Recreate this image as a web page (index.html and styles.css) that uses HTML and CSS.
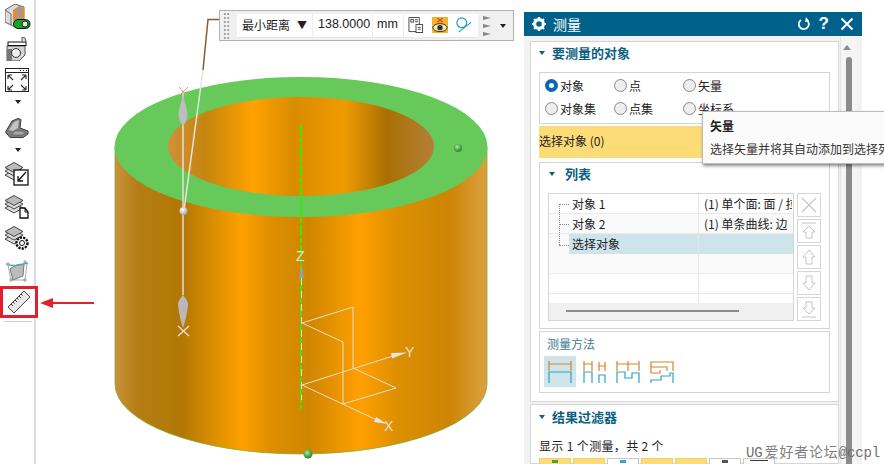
FILE: index.html
```html
<!DOCTYPE html>
<html lang="zh">
<head>
<meta charset="utf-8">
<title>测量</title>
<link rel="stylesheet" href="styles.css">
</head>
<body>
<div class="app">
  <nav class="rail">
    <svg class="ic ic1" viewBox="0 0 26 25"><path d="M0 6l10-6 9 3v14l-9 6-10-5z" fill="#dcdcdc" stroke="#666"/><path d="M8 6l6-4 5 2v13l-5 3-6-3z" fill="#e08a3a"/><path d="M12 4l4-2v16l-4 2z" fill="#9a9a9a"/><path d="M0 6l6 4v11" fill="none" stroke="#666"/><rect x="8.500" y="15.500" width="16.500" height="9" rx="4.500" fill="#12a52a" stroke="#111"/><circle cx="20" cy="20" r="3" fill="#dff2e0" stroke="#111"/></svg>
    <svg class="ic ic2" viewBox="0 0 24 24"><path d="M2 9v15h12l6-6V9z" fill="#d4d4d4" stroke="#555"/><path d="M2 12h5v12H2z" fill="#777"/><circle cx="11" cy="16" r="4.500" fill="#eee" stroke="#333"/><rect x="3" y="5" width="18" height="3.500" fill="#fff" stroke="#111"/><path d="M17 5V0l3 1 1 4z" fill="#ddd" stroke="#555"/></svg>
    <svg class="ic ic3" viewBox="0 0 24 24"><rect x=".5" y=".5" width="23" height="23" fill="#fff" stroke="#222"/><path d="M1 4.500h22" stroke="#222"/><path d="M15 2.500h1M18 2.500h1M21 2.500h1" stroke="#222"/><path d="M3 7l5 5M3 7h4M3 7v4M21 7l-5 5M21 7h-4M21 7v4M3 22l5-5M3 22h4M3 22v-4M21 22l-5-5M21 22h-4M21 22v-4" fill="none" stroke="#333" stroke-width="1.200"/></svg>
    <span class="caret"></span>
    <svg class="ic ic4" viewBox="0 0 24 20"><path d="M.5 14L7 3l6-2.500 3 1L15 10l8 3v3l-5 3.500H5z" fill="#7d7d7d" stroke="#3f3f3f"/><path d="M4 12L9 4l5-2-1 8-5 3z" fill="#c4c4c4"/><path d="M7 16l3-3h7l3 2-3 2H9z" fill="#a8a8a8" stroke="#555" stroke-width=".6"/></svg>
    <span class="caret caret-b"></span>
    <svg class="ic ic5" viewBox="0 0 24 24"><g fill="#ddd" stroke="#444"><path d="M0 13l9-5 9 5-9 5z"/><path d="M0 9l9-5 9 5-9 5z"/><path d="M0 5.500L9 .5l9 5-9 5z" fill="#bbb"/></g><rect x="9" y="8" width="14" height="15" fill="#fff" stroke="#111" stroke-width="1.300"/><path d="M13 19l8-9M13 14v5h5" fill="none" stroke="#111" stroke-width="1.300"/></svg>
    <svg class="ic ic6" viewBox="0 0 24 24"><g fill="#ddd" stroke="#444"><path d="M0 13l9-5 9 5-9 5z"/><path d="M0 9l9-5 9 5-9 5z"/><path d="M0 5.500L9 .5l9 5-9 5z" fill="#bbb"/></g><path d="M15 13h5l3 4v6H15z" fill="#fff" stroke="#111" stroke-width="1.300"/><path d="M20 13v4h3" fill="none" stroke="#111"/></svg>
    <svg class="ic ic7" viewBox="0 0 24 25"><g fill="#ddd" stroke="#444"><path d="M0 13l9-5 9 5-9 5z"/><path d="M0 9l9-5 9 5-9 5z"/><path d="M0 5.500L9 .5l9 5-9 5z" fill="#bbb"/></g><circle cx="17" cy="17" r="5.500" fill="#fff" stroke="#111" stroke-width="2.500" stroke-dasharray="2.200 1.100"/><circle cx="17" cy="17" r="2.500" fill="#fff" stroke="#111"/></svg>
    <svg class="ic ic8" viewBox="0 0 24 22"><path d="M5 9c5-4 9-5 14-5l-1 12-10 4z" fill="#bbb" stroke="#777"/><path d="M1 4c7 3 14 1 22-1" fill="none" stroke="#3fb0bf" stroke-width="1.300"/><path d="M3 5l3 15h14l2-16" fill="none" stroke="#888" stroke-width=".7"/><path d="M2 3h2v2H2zM19 1h2v2h-2zM5 19h2v2H5zM19 19h2v2h-2z" fill="#fff" stroke="#666" stroke-width=".6"/></svg>
    <div class="active-tool"><svg class="ruler" viewBox="0 0 24 24"><path d="M1 17L17 1l6 6L7 23z" fill="#e9e9e9" stroke="#444"/><path d="M4 14l2 2M6 12l1.500 1.500M8 10l2 2M10 8l1.500 1.500M12 6l2 2M14 4l1.500 1.500" stroke="#333" stroke-width="1"/></svg></div>
    <hr class="rail-rule">
  </nav>

  <main class="canvas">
    <svg class="scene" viewBox="36 0 488 464">
      <defs>
        <linearGradient id="wall" x1="115" x2="487" y1="0" y2="0" gradientUnits="userSpaceOnUse">
          <stop offset="0" stop-color="#c9923a"/><stop offset=".06" stop-color="#b57d15"/><stop offset=".18" stop-color="#b27704"/><stop offset=".26" stop-color="#d98d00"/><stop offset=".34" stop-color="#ffa100"/><stop offset=".42" stop-color="#dd8f00"/><stop offset=".52" stop-color="#cf8600"/><stop offset=".66" stop-color="#ffa000"/><stop offset=".76" stop-color="#dc8f00"/><stop offset=".9" stop-color="#cc8505"/><stop offset="1" stop-color="#dca043"/>
        </linearGradient>
        <linearGradient id="bore" x1="168" x2="435" y1="0" y2="0" gradientUnits="userSpaceOnUse">
          <stop offset="0" stop-color="#cf9238"/><stop offset=".14" stop-color="#c5850f"/><stop offset=".32" stop-color="#ffa200"/><stop offset=".47" stop-color="#d98c00"/><stop offset=".66" stop-color="#f09a00"/><stop offset=".82" stop-color="#a87002"/><stop offset="1" stop-color="#b4803a"/>
        </linearGradient>
        <radialGradient id="ball" cx=".4" cy=".35" r=".7"><stop offset="0" stop-color="#b8e8a8"/><stop offset=".5" stop-color="#55b050"/><stop offset="1" stop-color="#2f8032"/></radialGradient>
        <radialGradient id="pearl" cx=".4" cy=".35" r=".7"><stop offset="0" stop-color="#ffffff"/><stop offset="1" stop-color="#9c9c9c"/></radialGradient>
      </defs>
      <path d="M115 147V384A186 70 0 0 0 487 384V147z" fill="url(#wall)" stroke="#7fae3a" stroke-width=".8"/>
      <ellipse cx="301" cy="147" rx="186.500" ry="70" fill="#66c95a"/>
      <ellipse cx="301" cy="146.500" rx="133" ry="49.500" fill="url(#bore)"/>
      <path d="M301 125V409" stroke="#39e80e" stroke-width="2" stroke-dasharray="11 2 5 2"/>
      <path d="M219 19.500H208L203 70" fill="none" stroke="#8a5a32" stroke-width="1.500"/>
      <path d="M203 70L184 210" fill="none" stroke="#e4e4e0" stroke-width="1.500"/>
      <path d="M183 90V295" stroke="#e4e0d8" stroke-width="1.500"/>
      <path d="M179 87l8 9M188 87l-9 9" stroke="#c9a77c" stroke-width="1"/>
      <path d="M183 93C184 100 187 108 187.500 114C187.500 120 185 123 183 126C181 123 178.500 120 178.500 114C179 108 182 100 183 93z" fill="#bdbdbd"/>
      <path d="M183 295C185 298 188 300 188 305C187 314 185 322 183 328C181 322 179 314 178 305C178 300 181 298 183 295z" fill="#b9b9bd"/>
      <path d="M178 326l11 10M189 326l-11 10" stroke="#e8e4de" stroke-width="1.200"/>
      <circle cx="183.500" cy="211" r="4" fill="url(#pearl)"/>
      <circle cx="458" cy="148" r="4" fill="url(#ball)"/>
      <circle cx="308" cy="454" r="4.500" fill="url(#ball)"/>
      <g fill="none" stroke="#e8dfcf" stroke-width="1">
        <path d="M301.500 278V400" stroke-dasharray="7 6"/>
        <path d="M302 323L353 307V368M302 323L343 342V404M302 385L396 355M302 385L379 421M343 404L396 388L353 368"/>
      </g>
      <path d="M391 353l16-.5-15 6z" fill="#e4e4e4"/>
      <path d="M376 417l11 7-13-2z" fill="#e4e4e4"/>
      <path d="M301.500 264l2.500 14h-5z" fill="#8fa3a8"/>
      <text class="axis" x="296" y="261">Z</text>
      <text class="axis" x="405" y="357">Y</text>
      <text class="axis" x="384" y="431">X</text>
      <path d="M94 303H50" stroke="#e3202c" stroke-width="2"/>
      <path d="M40 303l13-5v10z" fill="#e3202c"/>
    </svg>

    <div class="float-bar">
      <span class="grip"></span>
      <div class="float-field">
        <span class="fld fld-name">最小距离<i class="tri">▼</i></span>
        <span class="fld fld-val">138.0000</span>
        <span class="fld fld-unit">mm</span>
        <svg class="fi" viewBox="0 0 16 17"><path d="M.5.5h11v9h-3v6h-8z" fill="#fff" stroke="#444"/><rect x="8" y="8" width="7" height="8.500" fill="#fff" stroke="#444"/><path d="M2.500 2.500h3v3h-3zM7 3h3M7 5h3M10 11h3M10 13h3" stroke="#444" fill="none"/></svg>
        <svg class="fi fi-eye" viewBox="0 0 18 18"><rect width="18" height="18" fill="#f3b52c"/><path d="M6 1l6 5M12 1L6 6" stroke="#d8501e" stroke-width="1.500"/><ellipse cx="9" cy="12" rx="8" ry="4.500" fill="#f7e8b0" stroke="#222"/><circle cx="9" cy="12" r="3" fill="#333"/></svg>
        <svg class="fi" viewBox="0 0 18 18"><circle cx="6.500" cy="6.500" r="5.500" fill="none" stroke="#1b9ec6" stroke-width="1.300"/><path d="M3 17L17 6" stroke="#1b9ec6" stroke-width="1.300"/></svg>
      </div>
      <span class="bar-more"><i></i><i></i><i></i></span>
      <span class="caret caret-sm"></span>
    </div>
  </main>

  <aside class="panel">
    <header class="panel-title">
      <svg class="gear" viewBox="0 0 16 16"><circle cx="8" cy="8" r="5" fill="none" stroke="#fff" stroke-width="3.600"/><path d="M8 0v3M8 13v3M0 8h3M13 8h3M2.300 2.300l2 2M11.700 11.700l2 2M2.300 13.700l2-2M11.700 4.300l2-2" stroke="#fff" stroke-width="2.400"/></svg>
      <span class="panel-name">测量</span>
      <svg class="reset" viewBox="0 0 14 14"><path d="M4 3a5 5 0 1 0 6 .3" fill="none" stroke="#fff" stroke-width="1.800"/><path d="M9 0l3 4-4 1z" fill="#fff"/></svg>
      <span class="help">?</span>
      <svg class="close" viewBox="0 0 14 14"><path d="M1.500 1.500l11 11M12.500 1.500l-11 11" stroke="#fff" stroke-width="2"/></svg>
    </header>
    <div class="panel-body">
      <div class="panel-scroll">
        <section class="card card-main">
          <h2 class="sec-head"><span class="sec-arrow"></span>要测量的对象</h2>
          <div class="radio-box">
            <label class="rd"><i class="dot on"></i>对象</label>
            <label class="rd"><i class="dot"></i>点</label>
            <label class="rd"><i class="dot"></i>矢量</label>
            <label class="rd"><i class="dot"></i>对象集</label>
            <label class="rd"><i class="dot"></i>点集</label>
            <label class="rd"><i class="dot"></i>坐标系</label>
          </div>
          <div class="select-row">选择对象 (0)</div>
          <div class="list-card">
            <h2 class="sec-head sec-list"><span class="sec-arrow"></span>列表</h2>
            <div class="list-wrap">
              <div class="table">
                <div class="row"><span class="c1">对象 1</span><span class="c2">(1) 单个面: 面 / 拉伸</span></div>
                <div class="row alt"><span class="c1">对象 2</span><span class="c2">(1) 单条曲线: 边</span></div>
                <div class="row sel"><span class="c1">选择对象</span><span class="c2"></span></div>
                <div class="row alt"><span class="c1"></span><span class="c2"></span></div>
                <div class="row"><span class="c1"></span><span class="c2"></span></div>
                <div class="row"><span class="c1"></span><span class="c2"></span></div>
                <span class="tree"></span>
                <span class="tree-b t1"></span><span class="tree-b t2"></span><span class="tree-b t3"></span>
                <div class="hscroll"><i></i></div>
              </div>
              <div class="list-btns">
                <button class="lb"><svg viewBox="0 0 22 22"><path d="M4 4l14 14M18 4L4 18" stroke="#c4c4c4" stroke-width="1.200"/></svg></button>
                <button class="lb"><svg viewBox="0 0 22 22"><path d="M4 3h14M11 6l6 6h-3v6H8v-6H5z" fill="none" stroke="#c4c4c4"/></svg></button>
                <button class="lb"><svg viewBox="0 0 22 22"><path d="M11 4l6 7h-3v7H8v-7H5z" fill="none" stroke="#c4c4c4"/></svg></button>
                <button class="lb"><svg viewBox="0 0 22 22"><path d="M11 18l6-7h-3V4H8v7H5z" fill="none" stroke="#c4c4c4"/></svg></button>
                <button class="lb"><svg viewBox="0 0 22 22"><path d="M4 19h14M11 16l6-6h-3V4H8v6H5z" fill="none" stroke="#c4c4c4"/></svg></button>
              </div>
            </div>
          </div>
          <div class="method-card">
            <h3 class="method-head">测量方法</h3>
            <div class="methods">
              <span class="mt on"><svg viewBox="0 0 24 23"><path d="M1 1V11M23 1V11M1 4h22" fill="none" stroke="#d98324" stroke-width="1.200"/><path d="M1 23V12H23V23" fill="none" stroke="#28a5c6" stroke-width="1.200"/></svg></span>
              <span class="mt"><svg viewBox="0 0 24 23"><path d="M2 1V11M10 1V11M2 4h8M17 2V11M23 2V11M17 6h6" fill="none" stroke="#d98324" stroke-width="1.200"/><path d="M2 23V12h8V23M17 23V15h6V23" fill="none" stroke="#28a5c6" stroke-width="1.200"/></svg></span>
              <span class="mt"><svg viewBox="0 0 24 23"><path d="M1 1V11M12 1V11M23 1V11M1 4h22" fill="none" stroke="#d98324" stroke-width="1.200"/><path d="M1 23V12h8v6h7v-5h7V23" fill="none" stroke="#28a5c6" stroke-width="1.200"/></svg></span>
              <span class="mt"><svg viewBox="0 0 24 23"><path d="M1 13V2H23V11M1 7H17V11M1 13H10V10" fill="none" stroke="#d98324" stroke-width="1.200"/><path d="M1 23V20H11V16H20V13H23V23" fill="none" stroke="#28a5c6" stroke-width="1.200"/></svg></span>
            </div>
          </div>
        </section>
        <section class="card card-filter">
          <h2 class="sec-head sec-filter"><span class="sec-arrow"></span>结果过滤器</h2>
          <p class="count">显示 1 个测量，共 2 个</p>
          <div class="filters"><i class="fb y m-green"></i><i class="fb y"></i><i class="fb m-teal"></i><i class="fb y"></i><i class="fb y"></i><i class="fb m-dark"></i><i class="fb m-wide"></i></div>
        </section>
      </div>
      <div class="vscroll"><span class="up"></span><span class="thumb"></span></div>
    </div>
    <div class="tooltip">
      <strong class="tip-title">矢量</strong>
      <span class="tip-text">选择矢量并将其自动添加到选择列表</span>
    </div>
  </aside>
</div>
<div class="watermark">UG<span class="wm-cjk">爱好者论坛</span>@ccpl</div>
</body>
</html>
```
FILE: styles.css
```css
* { box-sizing: border-box; }
html, body { margin: 0; height: 464px; overflow: hidden; background: #fff; }
body { position: relative; font: 12px/16px "Noto Sans CJK SC", "Liberation Sans", sans-serif; color: #222; }
.app { display: flex; width: 884px; height: 464px; overflow: hidden; }

.rail { flex: 0 0 36px; width: 36px; height: 464px; border-right: 2px solid #dcdcdc; display: flex; flex-direction: column; align-items: flex-start; position: relative; padding-top: 4px; z-index: 2; }
.ic { display: block; margin-left: 5px; width: 24px; height: 24px; flex: none; }
.ic1 { width: 26px; height: 25px; }
.ic2 { margin-top: 8px; }
.ic3 { margin-top: 7px; }
.ic4 { margin-top: 14px; height: 20px; }
.ic5 { margin-top: 10px; }
.ic6 { margin-top: 9px; }
.ic7 { margin-top: 7px; height: 25px; }
.ic8 { margin-top: 9px; height: 22px; }
.caret { display: block; width: 0; height: 0; margin: 8px 0 0 15px; border: 3px solid transparent; border-top: 4px solid #222; border-bottom: 0; flex: none; }
.caret-b { margin-top: 10px; }
.active-tool { flex: none; width: 38px; height: 32px; margin-top: 4px; border: 3px solid #e0202c; display: flex; align-items: center; justify-content: center; background: #fff; }
.ruler { width: 24px; height: 24px; }
.rail-rule { width: 28px; margin: 3px 0 0 4px; border: 0; border-top: 1px solid #d0d0d0; flex: none; }

.canvas { flex: 0 0 488px; width: 488px; height: 464px; position: relative; }
.scene { display: block; width: 488px; height: 464px; }
.axis { font: 14px "Liberation Sans", sans-serif; fill: #e8e2d6; }

.float-bar { position: absolute; left: 183px; top: 10px; width: 295px; height: 31px; background: #f0f0f0; border: 1px solid #b0b0b0; display: flex; align-items: center; }
.grip { width: 8px; height: 27px; margin: 0 6px 0 3px; background-image: radial-gradient(circle, #9a9a9a 1px, transparent 1.200px); background-size: 3.500px 4px; flex: none; }
.float-field { width: 241px; height: 24px; background: #fff; display: flex; align-items: center; border-bottom: 1px solid #e8e8e8; flex: none; }
.fld { font-size: 12px; white-space: nowrap; border-right: 1px solid #eee; height: 24px; line-height: 23px; flex: none; }
.fld-name { width: 76px; padding-left: 5px; display: flex; }
.tri { font-style: normal; font-size: 10px; margin-left: 7px; }
.fld-val { width: 60px; padding-left: 5px; font-family: "Liberation Sans", sans-serif; font-size: 12.500px; letter-spacing: 0; }
.fld-unit { width: 31px; padding-left: 4px; font-family: "Liberation Sans", sans-serif; font-size: 12.500px; }
.fi { width: 16px; height: 16px; margin: 0 4px; flex: none; }
.bar-more { display: flex; flex-direction: column; gap: 4px; margin-left: 5px; flex: none; }
.bar-more i { display: block; width: 0; height: 0; border-left: 8px solid #888; border-top: 2px solid transparent; border-bottom: 2px solid transparent; }
.caret-sm { margin: 1px 0 0 9px; }

.panel { flex: 0 0 338px; width: 338px; height: 452px; margin-top: 12px; background: #f2f2f2; position: relative; display: flex; flex-direction: column; }
.panel-title { height: 24px; background: #00628a; color: #fff; display: flex; align-items: center; padding: 0 8px; flex: none; }
.gear { width: 14px; height: 14px; flex: none; }
.panel-name { font-size: 14px; margin-left: 7px; flex: 1; }
.reset { width: 14px; height: 14px; margin-right: 8px; }
.help { font: bold 17px "Liberation Sans", sans-serif; margin-right: 11px; }
.close { width: 14px; height: 14px; }
.panel-body { flex: 1; display: flex; min-height: 0; }
.panel-scroll { width: 316px; padding: 5px 1px 0 6px; flex: none; }
.card { background: #fff; border: 1px solid #d6d6d6; width: 309px; }
.card-main { height: 361px; padding: 0 8px; display: flex; flex-direction: column; align-items: stretch; }
.sec-head { margin: 0; font-size: 13px; font-weight: bold; color: #0b5f80; line-height: 16px; display: flex; align-items: center; }
.card-main > .sec-head { margin-top: 3px; height: 16px; }
.sec-arrow { width: 0; height: 0; border: 3px solid transparent; border-top: 4px solid #0b5f80; border-bottom: 0; margin: 0 7px 0 0; flex: none; }
.radio-box { margin-top: 11px; height: 52px; border: 1px solid #d4d4d4; display: grid; grid-template-columns: 69px 69px 1fr; grid-auto-rows: 23px; padding: 1px 0 0 5px; }
.rd { display: flex; align-items: center; gap: 2px; white-space: nowrap; }
.dot { width: 13px; height: 13px; border-radius: 50%; border: 1px solid #888; background: #eee; flex: none; }
.dot.on { border: 4px solid #0a67b5; background: #fff; }
.select-row { margin-top: 2px; height: 32px; background: #fddc78; line-height: 30px; }
.list-card { margin-top: 4px; height: 167px; border: 1px solid #d4d4d4; padding: 0 8px; }
.sec-list { margin: 3px 0 0 1px; height: 16px; }
.sec-list .sec-arrow { margin-right: 10px; }
.list-wrap { display: flex; gap: 3px; margin-top: 11px; }
.table { position: relative; width: 247px; height: 128px; border: 1px solid #d6d6d6; overflow: hidden; }
.row { height: 20px; display: flex; border-bottom: 1px solid #eaeaea; background: #fff; }
.row.alt { background: #fafafa; }
.c1 { width: 150px; padding-left: 23px; border-right: 1px solid #e6e6e6; line-height: 19px; flex: none; white-space: nowrap; }
.c2 { flex: 1; padding-left: 5px; line-height: 19px; white-space: nowrap; overflow: hidden; margin-right: 1px; }
.row.sel { background: linear-gradient(to right, #fafafa 20px, #cde4ea 20px); border-bottom: 0; }
.tree { position: absolute; left: 10px; top: 10px; height: 41px; border-left: 1px dotted #888; }
.tree-b { position: absolute; left: 10px; width: 10px; border-top: 1px dotted #888; }
.t1 { top: 10px; } .t2 { top: 30px; } .t3 { top: 51px; }
.hscroll { position: absolute; left: 0; right: 0; bottom: 0; height: 17px; background: #f0f0f0; }
.hscroll i { position: absolute; left: 17px; top: 7px; width: 173px; height: 2px; background: #8a8a8a; }
.list-btns { display: flex; flex-direction: column; gap: 2px; }
.lb { width: 24px; height: 24px; padding: 0; background: #fff; border: 1px solid #d6d6d6; display: block; }
.lb svg { display: block; width: 22px; height: 22px; }
.method-card { margin-top: 2px; height: 62px; border: 1px solid #d4d4d4; padding: 4px 4px; }
.method-head { margin: 0 0 0 3px; font-size: 12px; font-weight: normal; color: #3e7a93; line-height: 16px; }
.methods { display: flex; margin-top: 4px; }
.mt { width: 32px; height: 31px; margin-right: 2px; padding: 4px; flex: none; }
.mt.on { background: #cde4ea; }
.mt svg { display: block; width: 24px; height: 23px; }
.card-filter { margin-top: 2px; height: 60px; padding: 4px 8px 0; }
.sec-filter { height: 16px; }
.count { margin: 13px 0 0; line-height: 16px; letter-spacing: .35px; }
.filters { display: flex; gap: 2px; margin-top: 4px; }
.fb { display: block; position: relative; width: 32px; height: 24px; border: 1px solid #c8c8c8; background: #fff; flex: none; }
.fb.y { background: #fddc78; border-color: #f2cf66; }
.fb::before { content: ""; position: absolute; left: 12px; top: 1px; width: 6px; height: 3px; }
.m-green::before { background: #4aa34a; }
.m-teal::before { background: #3aa5c4; }
.m-dark::before { background: #555; }
.m-wide::before { left: 6px; width: 18px; height: 1px; background: #333; }
.vscroll { flex: 1; position: relative; background: #f5f5f5; margin-right: 5px; border-left: 1px solid #e4e4e4; }
.up { position: absolute; left: 2px; top: 9px; width: 0; height: 0; border: 4px solid transparent; border-bottom: 5px solid #8c8c8c; border-top: 0; }
.thumb { position: absolute; left: 5px; top: 21px; width: 6px; bottom: 0; border-radius: 3px 3px 0 0; background: #8b8b8b; }

.tooltip { position: absolute; left: 178px; top: 99px; width: 260px; height: 53px; background: #fbfbfb; border: 1px solid #bcbcbc; box-shadow: 1px 2px 3px rgba(0,0,0,.45); padding: 6px 7px; z-index: 3; overflow: hidden; white-space: nowrap; }
.tip-title { display: block; font-size: 12px; font-weight: bold; line-height: 16px; }
.tip-text { display: block; margin-top: 7px; font-size: 12px; line-height: 16px; color: #333; }

.watermark { position: absolute; left: 746px; top: 444px; width: 138px; overflow: visible; font: 14px/18px "Liberation Mono", "Noto Sans CJK SC", monospace; color: #707070; z-index: 5; white-space: nowrap; letter-spacing: -.1px; }
.wm-cjk { margin-left: 2px; letter-spacing: .8px; color: #808080; }
```
